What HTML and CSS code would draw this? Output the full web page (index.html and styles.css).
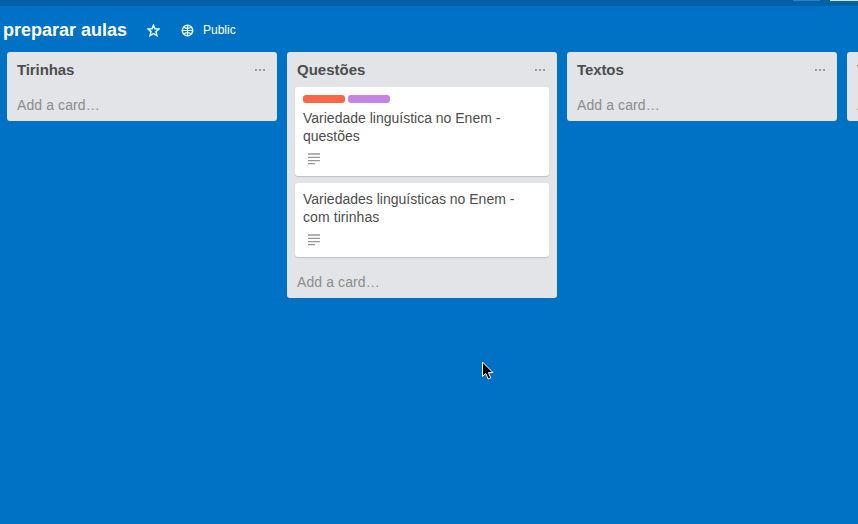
FILE: index.html
```html
<!DOCTYPE html>
<html lang="pt">
<head>
<meta charset="utf-8">
<title>preparar aulas</title>
<link rel="stylesheet" href="styles.css">
</head>
<body>
<div class="topbar"><span class="tab"></span><span class="avatar"></span></div>
<header class="board-header">
  <h1>preparar aulas</h1>
  <svg class="star" width="13" height="13" viewBox="0 0 13 13"><path d="M6.5 1.2 8 4.7 11.9 5 9 7.6 9.9 11.5 6.5 9.5 3.1 11.5 4 7.6 1.1 5 5 4.7Z"/></svg>
  <svg class="globe" width="13" height="13" viewBox="0 0 13 13"><circle cx="6.5" cy="6.5" r="5.2"/><path d="M6.5 1.3V11.7M1.3 6.5H11.7M3 3.3Q6.5 5.5 10 3.3M3 9.7Q6.5 7.5 10 9.7"/></svg>
  <span class="visibility">Public</span>
</header>
<main class="board">
  <section class="list">
    <div class="list-header"><h2 class="narrow">Tirinhas</h2><span class="menu"><i></i><i></i><i></i></span></div>
    <a class="add">Add a card…</a>
  </section>
  <section class="list">
    <div class="list-header"><h2>Questões</h2><span class="menu"><i></i><i></i><i></i></span></div>
    <div class="cards">
      <article class="card">
        <div class="labels"><span class="label orange"></span><span class="label purple"></span></div>
        <p>Variedade linguística no Enem -<br>questões</p>
        <svg class="desc" width="12" height="12" viewBox="0 0 12 12"><path d="M0 1H12M0 4.3H12M0 7.6H12M0 10.7H7"/></svg>
      </article>
      <article class="card">
        <p>Variedades linguísticas no Enem -<br><span class="wide">com tirinhas</span></p>
        <svg class="desc" width="12" height="12" viewBox="0 0 12 12"><path d="M0 1H12M0 4.3H12M0 7.6H12M0 10.7H7"/></svg>
      </article>
    </div>
    <a class="add">Add a card…</a>
  </section>
  <section class="list">
    <div class="list-header"><h2 class="narrow">Textos</h2><span class="menu"><i></i><i></i><i></i></span></div>
    <a class="add">Add a card…</a>
  </section>
  <section class="list">
    <div class="list-header"><h2>Vídeos</h2><span class="menu"><i></i><i></i><i></i></span></div>
    <a class="add">Add a card…</a>
  </section>
</main>
<svg class="cursor" width="14" height="20" viewBox="0 0 14 20"><path d="M1.5 1V15.5L4.8 12.5 7.2 18 9.8 16.9 7.4 11.6H12Z"/></svg>
</body>
</html>
```
FILE: styles.css
```css
* { box-sizing: border-box; }
body {
  margin: 0;
  height: 524px;
  overflow: hidden;
  background: #0072c6;
  font-family: "Liberation Sans", Arial, sans-serif;
  font-size: 14px;
  line-height: 18px;
  color: #4d4d4d;
}
h1, h2, p { margin: 0; }
.topbar {
  display: flex;
  justify-content: flex-end;
  gap: 10px;
  height: 6px;
  background: #0061a8;
}
.tab { width: 27px; height: 1px; background: #2b83cc; }
.avatar { width: 28px; height: 1px; background: #c9eaf2; }
.board-header {
  display: flex;
  align-items: center;
  height: 46px;
  padding: 2px 0 0 3px;
  color: #fff;
}
h1 { width: 124px; font-size: 18px; line-height: 24px; white-space: nowrap; }
.star, .globe { fill: none; stroke: #e6fbff; stroke-width: 1.5; }
.star { margin-left: 20px; }
.globe { margin-left: 21px; }
.globe path { stroke-width: 1.2; }
.visibility { margin-left: 9px; font-size: 12px; }
.board { display: flex; align-items: flex-start; gap: 10px; padding-left: 7px; }
.list {
  flex: none;
  width: 270px;
  padding-bottom: 7px;
  border-radius: 3px;
  background: #e2e4e8;
}
.list-header {
  display: flex;
  justify-content: space-between;
  height: 35px;
  padding: 9px 12px 0 10px;
}
h2 { font-size: 15px; line-height: 18px; }
.narrow { letter-spacing: -0.1px; }
.wide { letter-spacing: 0.08px; }
.menu { display: flex; gap: 2px; padding-top: 8px; }
.menu i { width: 2px; height: 2px; background: #999; }
.add {
  display: block;
  height: 27px;
  padding: 9px 10px 0;
  color: #8c8c8c;
  letter-spacing: 0.1px;
}
.cards { padding: 0 8px; }
.card {
  height: 74px;
  margin-bottom: 7px;
  padding: 7px 8px 0;
  border-radius: 3px;
  background: #fff;
  box-shadow: 0 1px 1px #bfc1c3;
}
.card:first-child { height: 89px; }
.labels { display: flex; gap: 3px; padding-top: 1px; height: 15px; }
.label { width: 42px; height: 8px; border-radius: 3px; }
.orange { background: #fb6746; }
.purple { background: #c783e3; }
.desc { display: block; margin: 8px 0 0 5px; stroke: #999; stroke-width: 1.3; }
.cursor { position: absolute; left: 481px; top: 361px; fill: #000; stroke: #fff; }
```
